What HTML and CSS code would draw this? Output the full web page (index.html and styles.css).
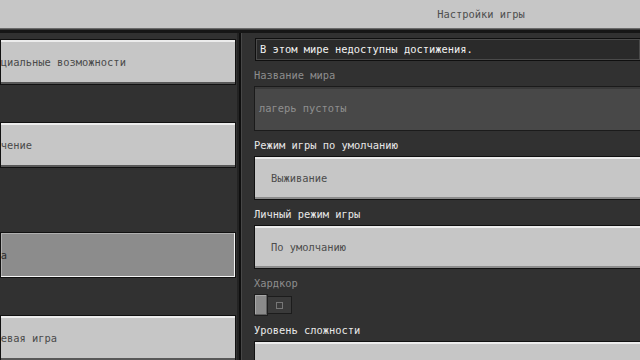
FILE: index.html
```html
<!DOCTYPE html>
<html lang="ru">
<head>
  <meta charset="UTF-8" />
  <meta name="viewport" content="width=device-width, initial-scale=1.0"/>
  <title>Настройки игры</title>
  <link rel="stylesheet" href="styles.css">
</head>
<body>

  <header class="topbar">
    <h1>Настройки игры</h1>
  </header>

  <main class="screen">
    <!-- Left tabs -->
    <nav class="sidebar">
      <button class="tab">Специальные возможности</button>
      <button class="tab">Обучение</button>
      <button class="tab tab-active group-start">Игра</button>
      <button class="tab">Сетевая игра</button>
    </nav>

    <!-- Game settings -->
    <section class="settings">
      <div class="notice">В этом мире недоступны достижения.</div>

      <div class="field-label is-disabled">Название мира</div>
      <div class="text-input">лагерь пустоты</div>

      <div class="field-label">Режим игры по умолчанию</div>
      <button class="dropdown">Выживание</button>

      <div class="field-label">Личный режим игры</div>
      <button class="dropdown">По умолчанию</button>

      <div class="field-label is-disabled">Хардкор</div>
      <div class="toggle">
        <span class="toggle-knob"></span>
        <span class="toggle-track"><span class="toggle-mark"></span></span>
      </div>

      <div class="field-label">Уровень сложности</div>
      <button class="dropdown" aria-label="Уровень сложности"></button>
    </section>
  </main>

</body>
</html>
```

FILE: styles.css
```css
html, body {
  margin: 0;
  padding: 0;
  height: 100%;
  overflow: hidden;
}

body {
  font-family: 'DejaVu Sans Mono', 'Liberation Mono', monospace;
  font-size: 10.4px;
  background: #313131;
  color: #e6e6e6;
}

button {
  font: inherit;
  margin: 0;
  cursor: pointer;
}

/* Top bar */
.topbar {
  height: 28px;
  background: #c6c6c6;
  border-bottom: 1px solid #6a6a6a;
  box-shadow: 0 1px 0 #3c3c3c, 0 4px 0 #161616;
  padding-left: 322px;
  display: flex;
  align-items: center;
  justify-content: center;
}

.topbar h1 {
  margin: 0;
  font-size: 10.4px;
  font-weight: normal;
  color: #4e4e4e;
}

.screen {
  display: flex;
  margin-top: 4px;
  height: calc(100% - 33px);
}

/* Left column */
.sidebar {
  width: 237px;
  flex-shrink: 0;
  padding-top: 6px;
  display: flex;
  flex-direction: column;
  border-right: 2px solid #232323;
}

.tab {
  flex-shrink: 0;
  height: 46px;
  width: 236px;
  padding: 0;
  text-align: left;
  text-indent: -19px;
  white-space: nowrap;
  overflow: hidden;
  color: #4a4a4a;
  background: #c6c6c6;
  border: 1px solid #111;
  box-shadow: inset 0 2px 0 #ececec, inset 0 -2px 0 #585858;
}

.tab + .tab {
  margin-top: 37px;
}

.tab.group-start {
  margin-top: 64px;
}

.tab-active {
  background: #8c8c8c;
  color: #2e2e2e;
  box-shadow: inset -1px -1px 0 #f4f4f4, inset 1px 1px 0 #b0b0b0;
}

/* Right column */
.settings {
  flex: 1;
  border-left: 2px solid #0e0e0e;
  box-shadow: inset 1px 0 0 #474747;
  padding: 5px 0 0 13px;
}

.notice {
  height: 21px;
  line-height: 21px;
  padding-left: 4px;
  margin-left: 1px;
  background: #2a2a2a;
  border: 1px solid #0f0f0f;
  border-right: none;
  box-shadow: inset 0 0 0 1px #4a4a4a;
  color: #f2f2f2;
}

.field-label {
  padding: 9px 0 6px;
  line-height: 10px;
  color: #e8e8e8;
}

.field-label.is-disabled {
  color: #8d8d8d;
}

.text-input {
  height: 43px;
  line-height: 43px;
  padding-left: 4px;
  background: #484848;
  border: 1px solid #1b1b1b;
  border-right: none;
  box-shadow: inset 0 2px 0 #3a3a3a;
  color: #8f8f8f;
}

.dropdown {
  display: block;
  width: 100%;
  height: 44px;
  padding: 0 0 0 16px;
  text-align: left;
  color: #4c4c4c;
  background: #c6c6c6;
  border: 1px solid #111;
  border-right: none;
  box-shadow: inset 0 2px 0 #ececec, inset 0 -2px 0 #8c8c8c;
}

/* Hardcore toggle (off, disabled) */
.toggle {
  display: flex;
  width: 38px;
  height: 22px;
}

.toggle-knob {
  width: 12px;
  background: #8a8a8a;
  border: 1px solid #1e1e1e;
  box-shadow: inset -1px -1px 0 #5e5e5e, inset 1px 1px 0 #a8a8a8;
}

.toggle-track {
  flex: 1;
  margin: 2px 0;
  background: #3a3a3a;
  border: 1px solid #1c1c1c;
  border-left: none;
  display: flex;
  align-items: center;
  justify-content: center;
}

.toggle-mark {
  width: 5px;
  height: 5px;
  border: 1px solid #777;
}
```
